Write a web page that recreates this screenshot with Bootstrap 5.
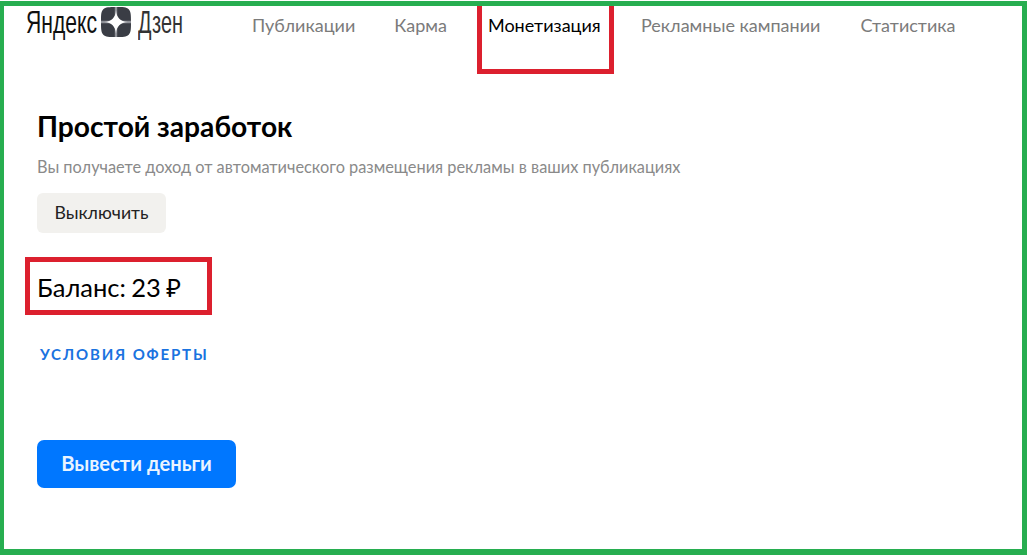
<!DOCTYPE html>
<html lang="ru">
<head>
<meta charset="utf-8">
<title>Монетизация</title>
<link href="https://cdn.jsdelivr.net/npm/bootstrap@5.3.0/dist/css/bootstrap.min.css" rel="stylesheet">
<style>
html,body{height:100%;background:#fff;}
body{font-family:"Lato","Noto Sans",sans-serif;overflow:hidden;padding-top:1px;}
.zen-frame{width:1027px;height:554px;border:solid #27ae50;border-width:5px 5px 6px 4px;}
.zen-top{height:67px;padding-left:22px;}
.zen-logo{width:158px;height:32px;color:#111;flex-shrink:0;}
.zen-word{font-family:"Liberation Sans",sans-serif;font-size:32px;line-height:32px;display:inline-block;white-space:nowrap;transform-origin:left center;}
.zen-w1{width:75px;transform:scaleX(.66);}
.zen-w2{width:45px;transform:scaleX(.62);color:#333;margin-left:7px;}
.zen-tabs{margin-left:68px;}
.zen-tab{font-size:18px;color:#7b7b7b;text-decoration:none;line-height:24px;white-space:nowrap;}
.zen-tabbox{box-sizing:content-box;flex-shrink:0;width:121px;height:56px;border:solid #dc202e;border-width:0 5px 5px 5px;padding:7px 0 0 6px;color:#000;margin-right:27px;margin-left:30px;}
.zen-plain{padding-top:7px;}
.zen-gap1{margin-left:39px;}
.zen-gap2{margin-left:40px;}
.zen-body{padding:0 0 0 33px;}
.zen-h{font-size:28.2px;font-weight:700;color:#000;line-height:34px;margin:36px 0 0;}
.zen-sub{font-size:16.35px;color:#8a8a8a;line-height:22px;margin:13px 0 0;white-space:nowrap;}
.zen-off{background:#f2f1ee;color:#222;font-size:17.7px;border:0;border-radius:6px;width:129px;height:40px;padding:0;margin-top:15px;display:block;}
.zen-bal{width:187px;height:58px;border:5px solid #dc202e;margin:24px 0 0 -12px;padding-left:7px;font-size:25.5px;word-spacing:-1.2px;line-height:51px;color:#000;white-space:nowrap;}
.zen-terms{display:block;margin:28px 0 0 3px;font-size:15px;font-weight:700;letter-spacing:1.85px;color:#1a73e0;text-decoration:none;line-height:22px;}
.zen-pay{display:block;margin-top:75px;width:199px;height:48px;background:#0077ff;color:#eaf4ff;font-size:20.2px;font-weight:700;border:0;border-radius:7px;padding:0 0 2px;}
</style>
</head>
<body>
<div class="zen-frame">
  <header class="zen-top d-flex align-items-start">
    <div class="zen-logo d-flex align-items-center">
      <span class="zen-word zen-w1">Яндекс</span>
      <svg width="30" height="30" viewBox="0 0 30 30" class="flex-shrink-0" aria-hidden="true"><path fill="#3a3d45" d="M15 0C22 0 25.500 0 27.700 2.300S30 8 30 15 30 25.500 27.700 27.700 22 30 15 30 4.500 30 2.300 27.700 0 22 0 15 0 4.500 2.300 2.300 8 0 15 0Z"/><path fill="#8f9198" d="M13.800 0h2.400v30h-2.400zM0 13.800h30v2.400H0z"/><path fill="#fff" d="M15 3.500C15.500 10.500 19.500 14.500 26.500 15 19.500 15.500 15.500 19.500 15 26.500 14.500 19.500 10.500 15.500 3.500 15 10.500 14.500 14.500 10.500 15 3.500Z"/></svg>
      <span class="zen-word zen-w2">Дзен</span>
    </div>
    <nav class="zen-tabs d-flex align-items-start">
      <a class="zen-tab zen-plain" href="#">Публикации</a>
      <a class="zen-tab zen-plain zen-gap1" href="#">Карма</a>
      <a class="zen-tab zen-tabbox" href="#">Монетизация</a>
      <a class="zen-tab zen-plain" href="#">Рекламные кампании</a>
      <a class="zen-tab zen-plain zen-gap2" href="#">Статистика</a>
    </nav>
  </header>
  <main class="zen-body">
    <h1 class="zen-h">Простой заработок</h1>
    <p class="zen-sub">Вы получаете доход от автоматического размещения рекламы в ваших публикациях</p>
    <button class="btn zen-off" type="button">Выключить</button>
    <div class="zen-bal">Баланс: 23 ₽</div>
    <a class="zen-terms" href="#">УСЛОВИЯ ОФЕРТЫ</a>
    <button class="btn zen-pay" type="button">Вывести деньги</button>
  </main>
</div>
<script src="https://cdn.jsdelivr.net/npm/bootstrap@5.3.0/dist/js/bootstrap.bundle.min.js"></script>
</body>
</html>
